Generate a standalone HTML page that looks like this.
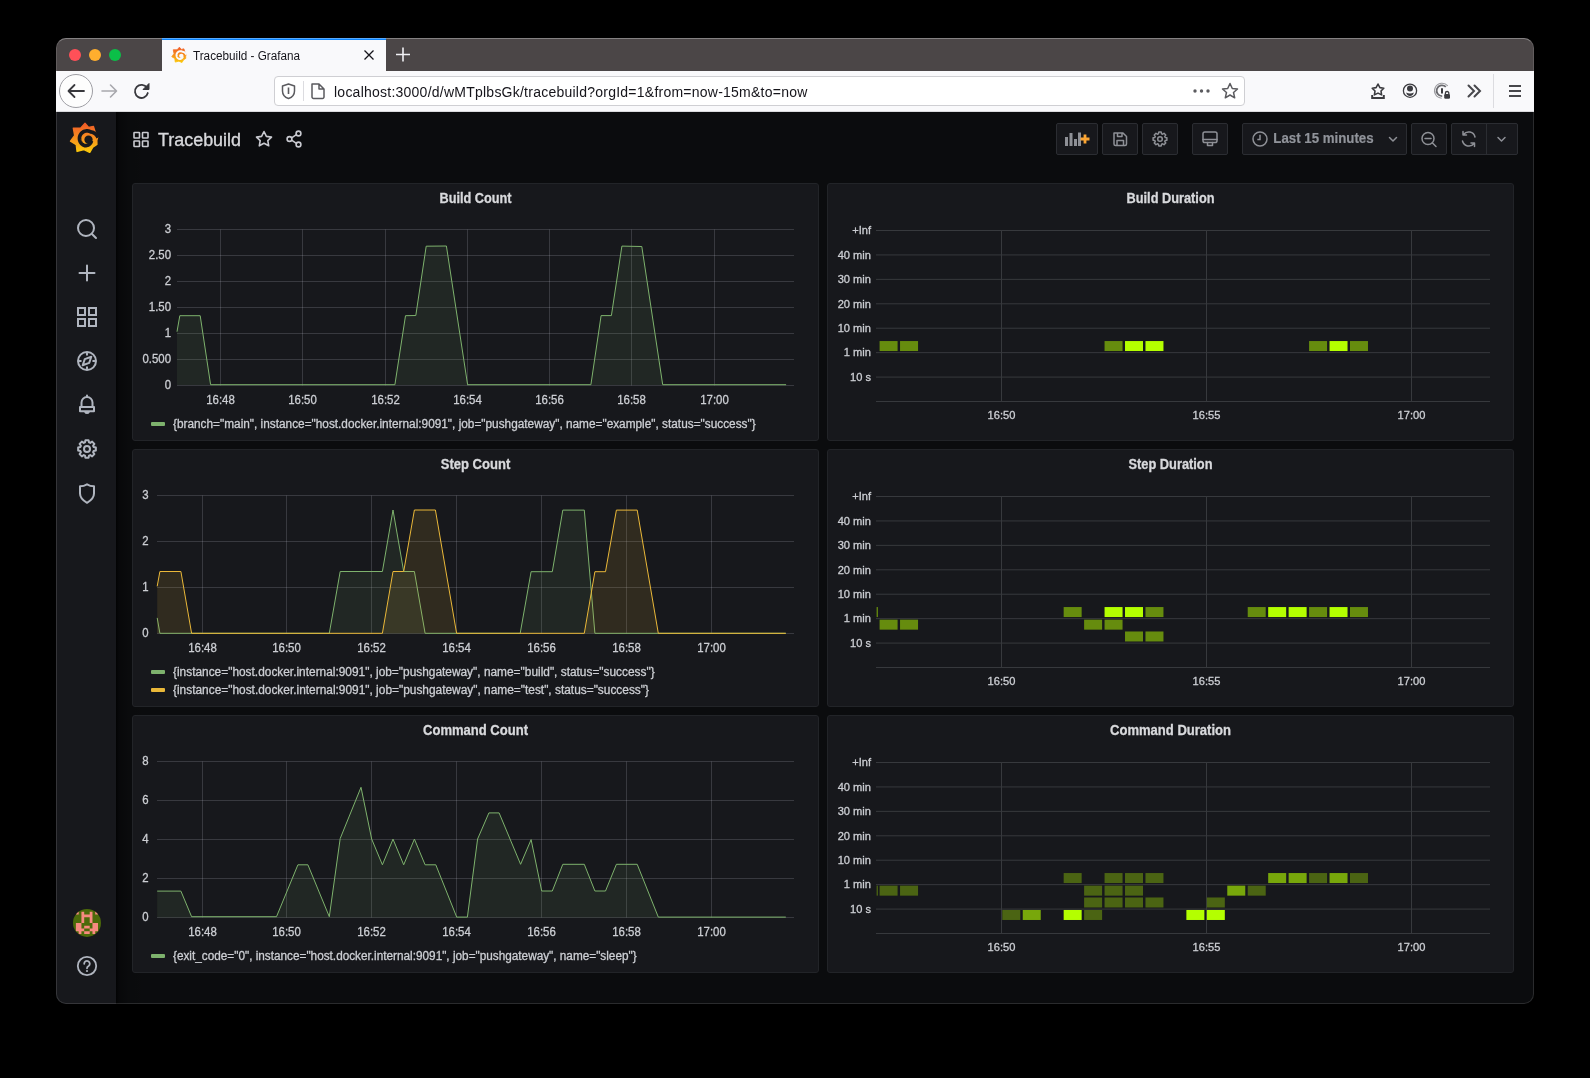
<!DOCTYPE html>
<html>
<head>
<meta charset="utf-8">
<title>Tracebuild - Grafana</title>
<style>
html,body{margin:0;padding:0;}
body{width:1590px;height:1078px;background:#000;position:relative;overflow:hidden;font-family:"Liberation Sans",sans-serif;}
.abs{position:absolute;}
#win{position:absolute;left:56px;top:38px;width:1478px;height:966px;border-radius:10px;overflow:hidden;background:#0b0c0e;}
#titlebar{position:absolute;left:0;top:0;width:1478px;height:33px;background:#4b4647;}
#toolbar{position:absolute;left:0;top:33px;width:1478px;height:41px;background:#f9f9fb;}
#tab{position:absolute;left:106px;top:0;width:224px;height:33px;background:#f9f9fb;}
#tab .blue{position:absolute;left:0;top:0;width:224px;height:2px;background:#0a84ff;}
#sidebar{position:absolute;left:0;top:74px;width:60px;height:892px;background:#17181c;}
#winborder{position:absolute;left:56px;top:38px;width:1478px;height:966px;border-radius:10px;box-sizing:border-box;border:1px solid rgba(255,255,255,0.13);border-top-color:rgba(255,255,255,0.32);pointer-events:none;}
#topedge{position:absolute;left:66px;top:38px;width:1458px;height:1px;background:rgba(255,255,255,0.28);}
.light{position:absolute;top:49px;width:12px;height:12px;border-radius:50%;}
#url{position:absolute;left:274px;top:76px;width:971px;height:30px;box-sizing:border-box;border:1px solid #cfcfd3;border-radius:4px;background:#fff;}
.urltext{position:absolute;left:334px;top:84px;font-size:14px;line-height:16px;color:#15141a;white-space:nowrap;letter-spacing:0.24px;will-change:transform;}
.btn{position:absolute;top:123px;height:32px;box-sizing:border-box;border:1px solid #2b2d32;border-radius:2px;background:#17181c;}
svg{position:absolute;left:0;top:0;overflow:visible;will-change:transform;}
svg text{font-family:"Liberation Sans",sans-serif;}
</style>
</head>
<body>
<div id="win">
  <div id="titlebar"></div>
  <div id="tab"><div class="blue"></div></div>
  <div id="toolbar"></div>
  <div id="sidebar"></div>
  <div style="position:absolute;left:60px;top:74px;width:30px;height:892px;background:linear-gradient(to right, rgba(0,0,0,0.75) 0px, rgba(0,0,0,0.35) 3px, rgba(0,0,0,0.12) 12px, rgba(0,0,0,0) 30px);"></div>
</div>
<div class="light" style="left:69px;background:#ff5058;"></div>
<div class="light" style="left:89px;background:#ffae2e;"></div>
<div class="light" style="left:109px;background:#0bbf48;"></div>

<div id="url"></div>
<div style="position:absolute;left:303px;top:81px;width:1px;height:20px;background:#dcdce0;"></div>
<div class="urltext">localhost:3000/d/wMTplbsGk/tracebuild?orgId=1&amp;from=now-15m&amp;to=now</div>
<div style="position:absolute;left:1493px;top:74px;width:1px;height:34px;background:#dcdce0;"></div>
<div style="position:absolute;left:56px;top:111px;width:1478px;height:1px;background:#dadadd;"></div>

<!-- header buttons -->
<div class="btn" style="left:1056px;width:42px;"></div>
<div class="btn" style="left:1102px;width:36px;"></div>
<div class="btn" style="left:1142px;width:36px;"></div>
<div class="btn" style="left:1192px;width:36px;"></div>
<div class="btn" style="left:1242px;width:165px;"></div>
<div class="btn" style="left:1411px;width:36px;"></div>
<div class="btn" style="left:1451px;width:67px;"></div>
<div style="position:absolute;left:1486px;top:124px;width:1px;height:30px;background:#2b2d32;"></div>

<svg width="1590" height="1078" viewBox="0 0 1590 1078">
<defs>
  <linearGradient id="glogo" x1="0" y1="0" x2="0" y2="1">
    <stop offset="0" stop-color="#f05a28"/><stop offset="0.55" stop-color="#f7941d"/>
    <stop offset="1" stop-color="#fbca0a"/>
  </linearGradient>
</defs>
<!-- ========== browser chrome ========== -->
<!-- tab favicon -->
<path d="M179.40,47.20 L181.35,49.40 L183.90,48.85 L184.87,51.99 L186.20,54.35 L185.70,56.28 L185.75,58.40 L183.57,59.87 L181.95,62.60 L178.90,61.13 L175.25,62.10 L174.80,58.52 L171.75,56.70 L173.99,53.69 L173.25,49.75 L177.12,49.83 Z" fill="url(#glogo)" stroke="url(#glogo)" stroke-width="0.80" stroke-linejoin="round"/>
<path d="M186.39,54.79 L186.22,54.43 L186.04,54.10 L185.84,53.78 L185.62,53.49 L185.39,53.21 L185.14,52.96 L184.88,52.74 L184.61,52.53 L184.33,52.35 L184.05,52.20 L183.76,52.07 L183.47,51.96 L183.18,51.87 L182.90,51.81 L182.61,51.78 L182.38,51.67 L182.15,51.56 L181.92,51.46 L181.68,51.38 L181.44,51.31 L181.19,51.26 L180.94,51.22 L180.69,51.20 L180.43,51.20 L180.18,51.21 L179.93,51.24 L179.68,51.28 L179.44,51.34 L179.19,51.42 L178.96,51.51 L178.73,51.61 L178.51,51.73 L178.29,51.87 L178.08,52.01 L177.89,52.17 L177.70,52.34 L177.53,52.52 L177.36,52.72 L177.21,52.92 L177.08,53.13 L176.95,53.35 L176.84,53.58 L176.75,53.82 L176.67,54.06 L176.60,54.30 L176.55,54.55 L176.52,54.80 L176.50,55.05 L176.50,55.30 L176.52,55.56 L176.55,55.81 L176.59,56.06 L176.65,56.30 L176.73,56.54 L176.82,56.78 L176.93,57.01 L177.05,57.23 L177.19,57.44 L177.34,57.65 L177.50,57.84 L177.67,58.03 L177.85,58.20 L178.05,58.36 L178.25,58.51 L178.47,58.64 L178.69,58.77 L178.92,58.87 L179.15,58.97 L179.39,59.04 L179.65,59.05 L179.91,59.03 L180.15,59.00 L180.40,58.95 L180.63,58.89 L180.86,58.81 L181.08,58.72 L181.28,58.62 L181.48,58.50 L181.67,58.37 L181.84,58.24 L182.00,58.09 L182.15,57.94 L182.28,57.78 L182.40,57.61 L182.51,57.44 L182.60,57.27 L182.68,57.09 L182.75,56.91 L182.80,56.73 L182.84,56.55" fill="none" stroke="#f9f9fb" stroke-width="1.95" stroke-linecap="butt" stroke-linejoin="round"/>
<circle cx="181.30" cy="55.85" r="2.20" fill="#f9f9fb"/>
<text x="193" y="59.8" font-size="12" fill="#15141a" textLength="107" lengthAdjust="spacingAndGlyphs">Tracebuild - Grafana</text>
<path d="M364.5,50.5 L373.5,59.5 M373.5,50.5 L364.5,59.5" stroke="#15141a" stroke-width="1.3"/>
<path d="M403,47.5 V61.5 M396,54.5 H410" stroke="#f0f0f4" stroke-width="1.6"/>

<!-- back / forward / reload -->
<circle cx="76" cy="91" r="16.5" fill="#fdfdfd" stroke="#9d9da3" stroke-width="1"/>
<path d="M84,91 H69 M74.5,85 L68.5,91 L74.5,97" fill="none" stroke="#38383d" stroke-width="1.8" stroke-linecap="round" stroke-linejoin="round"/>
<path d="M102,91 H116 M110.5,85 L116.5,91 L110.5,97" fill="none" stroke="#a8a8ad" stroke-width="1.6" stroke-linecap="round" stroke-linejoin="round"/>
<path d="M147,88 A6.5,6.5 0 1 0 147.8,93" fill="none" stroke="#38383d" stroke-width="1.8" stroke-linecap="round"/>
<path d="M149,83.5 L149,89.5 L143,89.5 Z" fill="#38383d" stroke="#38383d" stroke-width="1" stroke-linejoin="round"/>

<!-- url icons -->
<path d="M288.5,84 L294.5,86 V91 C294.5,95 291.5,97.5 288.5,98.5 C285.5,97.5 282.5,95 282.5,91 V86 Z" fill="none" stroke="#5b5b5f" stroke-width="1.5" stroke-linejoin="round"/>
<path d="M288.5,87.5 V94" stroke="#5b5b5f" stroke-width="1.6"/>
<path d="M312,84 H319 L324,89 V97 A1.5,1.5 0 0 1 322.5,98.5 H313.5 A1.5,1.5 0 0 1 312,97 Z M319,84 V89 H324" fill="none" stroke="#5b5b5f" stroke-width="1.5" stroke-linejoin="round"/>
<circle cx="1195" cy="91" r="1.7" fill="#5b5b5f"/><circle cx="1201.5" cy="91" r="1.7" fill="#5b5b5f"/><circle cx="1208" cy="91" r="1.7" fill="#5b5b5f"/>
<path d="M1230,83.5 L1232.3,88.5 L1237.5,89 L1233.5,92.5 L1234.7,97.8 L1230,95 L1225.3,97.8 L1226.5,92.5 L1222.5,89 L1227.7,88.5 Z" fill="none" stroke="#5b5b5f" stroke-width="1.5" stroke-linejoin="round"/>

<!-- right toolbar icons -->
<path d="M1378,84 L1379.9,87.6 L1383.8,88.2 L1381,91 L1381.6,94.9 L1378,93.1 L1374.4,94.9 L1375,91 L1372.2,88.2 L1376.1,87.6 Z" fill="none" stroke="#3b3b3f" stroke-width="1.6" stroke-linejoin="round"/>
<path d="M1372.2,95 V98 H1383.8 V95" fill="none" stroke="#3b3b3f" stroke-width="2"/>
<circle cx="1410" cy="90.7" r="6.6" fill="none" stroke="#3b3b3f" stroke-width="1.3"/>
<circle cx="1410" cy="88.6" r="3" fill="#3b3b3f"/>
<path d="M1406.2,92.6 Q1410,94.4 1413.8,92.6 Q1413.2,95.9 1410,96 Q1406.8,95.9 1406.2,92.6 Z" fill="#3b3b3f"/>
<path d="M1447.75,85.88 A7.5,7.5 0 1 0 1441.74,98.20" fill="none" stroke="#9a9a9e" stroke-width="1.1"/>
<path d="M1445.82,86.88 A5.4,5.4 0 1 0 1442.19,96.10" fill="none" stroke="#6a6a6e" stroke-width="1.8"/>
<path d="M1442,88.2 V93.6" stroke="#3b3b3f" stroke-width="2"/>
<rect x="1444.2" y="94" width="5.8" height="4.8" rx="1.2" fill="#3b3b3f"/>
<path d="M1445.4,94.5 V93.2 A1.7,1.7 0 0 1 1448.8,93.2 V94.5" fill="none" stroke="#3b3b3f" stroke-width="1.3"/>
<path d="M1468.5,85.5 L1474,91 L1468.5,96.5 M1474.5,85.5 L1480,91 L1474.5,96.5" fill="none" stroke="#47474b" stroke-width="2" stroke-linecap="round" stroke-linejoin="miter"/>
<path d="M1509,86 H1521 M1509,91 H1521 M1509,96 H1521" stroke="#47474b" stroke-width="2"/>

<!-- ========== grafana sidebar ========== -->
<path d="M84.92,123.37 L88.59,127.52 L93.38,126.47 L95.20,132.37 L97.71,136.81 L96.77,140.44 L96.86,144.43 L92.77,147.18 L89.72,152.32 L83.99,149.57 L77.12,151.38 L76.28,144.65 L70.54,141.23 L74.76,135.57 L73.36,128.17 L80.63,128.32 Z" fill="url(#glogo)" stroke="url(#glogo)" stroke-width="1.50" stroke-linejoin="round"/>
<path d="M98.06,137.64 L97.75,136.97 L97.41,136.34 L97.03,135.75 L96.62,135.19 L96.18,134.68 L95.71,134.21 L95.22,133.78 L94.72,133.40 L94.20,133.06 L93.67,132.77 L93.13,132.52 L92.58,132.32 L92.04,132.16 L91.50,132.05 L90.96,131.97 L90.53,131.77 L90.10,131.56 L89.66,131.38 L89.21,131.23 L88.75,131.10 L88.29,131.00 L87.82,130.94 L87.34,130.90 L86.87,130.89 L86.39,130.92 L85.92,130.97 L85.45,131.05 L84.99,131.16 L84.54,131.30 L84.09,131.47 L83.66,131.67 L83.24,131.89 L82.84,132.14 L82.45,132.42 L82.08,132.72 L81.73,133.04 L81.40,133.38 L81.10,133.75 L80.81,134.13 L80.55,134.53 L80.32,134.94 L80.12,135.37 L79.94,135.81 L79.79,136.26 L79.66,136.72 L79.57,137.19 L79.51,137.66 L79.48,138.13 L79.47,138.61 L79.50,139.08 L79.56,139.55 L79.65,140.02 L79.76,140.48 L79.91,140.93 L80.08,141.38 L80.28,141.81 L80.51,142.22 L80.76,142.63 L81.04,143.01 L81.35,143.38 L81.67,143.73 L82.02,144.05 L82.38,144.35 L82.77,144.63 L83.17,144.89 L83.59,145.12 L84.02,145.32 L84.46,145.49 L84.91,145.64 L85.40,145.64 L85.87,145.61 L86.34,145.56 L86.80,145.47 L87.24,145.35 L87.67,145.20 L88.07,145.03 L88.46,144.84 L88.83,144.62 L89.18,144.38 L89.51,144.12 L89.81,143.85 L90.09,143.56 L90.34,143.26 L90.57,142.95 L90.77,142.62 L90.95,142.30 L91.09,141.96 L91.22,141.63 L91.32,141.29 L91.39,140.95" fill="none" stroke="#17181c" stroke-width="3.67" stroke-linecap="butt" stroke-linejoin="round"/>
<circle cx="88.50" cy="139.63" r="4.14" fill="#17181c"/>
<g fill="none" stroke="#b0b5bf" stroke-width="2" stroke-linecap="round" stroke-linejoin="round">
  <circle cx="86" cy="228" r="8"/><path d="M92.2,234.2 L96,238"/>
  <path d="M87,265.5 V280.5 M79.5,273 H94.5"/>
</g>
<g fill="none" stroke="#b0b5bf" stroke-width="2" stroke-linejoin="miter">
  <rect x="78" y="308" width="7" height="7"/><rect x="89" y="308" width="7" height="7"/>
  <rect x="78" y="319" width="7" height="7"/><rect x="89" y="319" width="7" height="7"/>
</g>
<g fill="none" stroke="#b0b5bf" stroke-width="2" stroke-linecap="round" stroke-linejoin="round">
  <circle cx="87" cy="361" r="9"/>
  <path d="M87,353.5 V354.8 M87,367.2 V368.5 M79.5,361 H80.8 M93.2,361 H94.5"/>
  <path d="M91.3,356.7 L89.2,362.9 L82.7,365.3 L84.8,359.1 Z"/>
  <path d="M81.5,406.3 V402.5 A5.5,5.5 0 0 1 92.5,402.5 V406.3 M80,407 H94 V411.3 H80 Z M85.2,412 A2,1.8 0 0 0 88.8,412 M87,395.5 V397"/>
  <path d="M84.98,442.40 L85.44,440.14 L88.56,440.14 L89.02,442.40 L90.24,442.91 L92.16,441.63 L94.37,443.84 L93.09,445.76 L93.60,446.98 L95.86,447.44 L95.86,450.56 L93.60,451.02 L93.09,452.24 L94.37,454.16 L92.16,456.37 L90.24,455.09 L89.02,455.60 L88.56,457.86 L85.44,457.86 L84.98,455.60 L83.76,455.09 L81.84,456.37 L79.63,454.16 L80.91,452.24 L80.40,451.02 L78.14,450.56 L78.14,447.44 L80.40,446.98 L80.91,445.76 L79.63,443.84 L81.84,441.63 L83.76,442.91 Z" fill="none" stroke="#b0b5bf" stroke-width="2.0" stroke-linejoin="round"/><circle cx="87" cy="449" r="3.0" fill="none" stroke="#b0b5bf" stroke-width="2.0"/>
  <path d="M87,484.3 C85,485.6 82.5,486.3 80,486.3 V493.5 C80,497.5 83,500.5 87,502.8 C91,500.5 94,497.5 94,493.5 V486.3 C91.5,486.3 89,485.6 87,484.3 Z"/>
  <circle cx="87" cy="966" r="9.2" stroke-width="1.8"/>
</g>
<path d="M84.2,963.8 A2.8,2.8 0 1 1 88.6,966 C87.5,966.6 87,967.2 87,968.3" fill="none" stroke="#b0b5bf" stroke-width="1.8" stroke-linecap="round"/>
<circle cx="87" cy="971" r="1.1" fill="#b0b5bf"/>
<!-- avatar -->
<defs><clipPath id="avclip"><circle cx="87" cy="922.9" r="14"/></clipPath></defs>
<g clip-path="url(#avclip)">
  <rect x="72" y="908" width="30" height="30" fill="#4c6a0a"/>
  <path d="M75.90,911.70 h2.78 v2.82 h-2.78 Z M81.42,911.70 h2.78 v2.82 h-2.78 Z M89.70,911.70 h2.78 v2.82 h-2.78 Z M95.22,911.70 h2.78 v2.82 h-2.78 Z M81.42,914.50 h2.78 v2.82 h-2.78 Z M84.18,914.50 h2.78 v2.82 h-2.78 Z M86.94,914.50 h2.78 v2.82 h-2.78 Z M89.70,914.50 h2.78 v2.82 h-2.78 Z M81.42,917.30 h2.78 v2.82 h-2.78 Z M89.70,917.30 h2.78 v2.82 h-2.78 Z M81.42,920.10 h2.78 v2.82 h-2.78 Z M89.70,920.10 h2.78 v2.82 h-2.78 Z M75.90,922.90 h2.78 v2.82 h-2.78 Z M78.66,922.90 h2.78 v2.82 h-2.78 Z M92.46,922.90 h2.78 v2.82 h-2.78 Z M95.22,922.90 h2.78 v2.82 h-2.78 Z M75.90,925.70 h2.78 v2.82 h-2.78 Z M78.66,925.70 h2.78 v2.82 h-2.78 Z M84.18,925.70 h2.78 v2.82 h-2.78 Z M86.94,925.70 h2.78 v2.82 h-2.78 Z M92.46,925.70 h2.78 v2.82 h-2.78 Z M95.22,925.70 h2.78 v2.82 h-2.78 Z M75.90,928.50 h2.78 v2.82 h-2.78 Z M78.66,928.50 h2.78 v2.82 h-2.78 Z M81.42,928.50 h2.78 v2.82 h-2.78 Z M89.70,928.50 h2.78 v2.82 h-2.78 Z M92.46,928.50 h2.78 v2.82 h-2.78 Z M95.22,928.50 h2.78 v2.82 h-2.78 Z M78.66,931.30 h2.78 v2.82 h-2.78 Z M84.18,931.30 h2.78 v2.82 h-2.78 Z M86.94,931.30 h2.78 v2.82 h-2.78 Z M92.46,931.30 h2.78 v2.82 h-2.78 Z" fill="#f78a80"/>
</g>

<!-- ========== grafana header ========== -->
<g fill="none" stroke="#c9cad0" stroke-width="1.6" stroke-linejoin="round" stroke-linecap="round">
  <rect x="134" y="132.5" width="5.5" height="5.5" rx="0.5"/><rect x="142.5" y="132.5" width="5.5" height="5.5" rx="0.5"/>
  <rect x="134" y="141" width="5.5" height="5.5" rx="0.5"/><rect x="142.5" y="141" width="5.5" height="5.5" rx="0.5"/>
  <path d="M264,131.5 L266.4,136.4 L271.5,137.1 L267.8,140.6 L268.7,145.8 L264,143.3 L259.3,145.8 L260.2,140.6 L256.5,137.1 L261.6,136.4 Z"/>
  <circle cx="298.5" cy="133.5" r="2.4"/><circle cx="289.5" cy="139" r="2.4"/><circle cx="298.5" cy="144.5" r="2.4"/>
  <path d="M291.6,137.8 L296.4,134.7 M291.6,140.2 L296.4,143.3"/>
</g>
<text x="158" y="146" font-size="18.5" fill="#d8d9dc" stroke="#d8d9dc" stroke-width="0.35" textLength="83" lengthAdjust="spacingAndGlyphs">Tracebuild</text>

<!-- header button icons -->
<g fill="#8e9096">
  <rect x="1065" y="137" width="3" height="9"/><rect x="1069.5" y="133" width="3" height="13"/><rect x="1074" y="139" width="3" height="7"/><rect x="1078" y="132.5" width="3" height="13.5"/>
</g>
<path d="M1085,134.5 V143.5 M1080.5,139 H1089.5" stroke="#fba534" stroke-width="2.8"/>
<g fill="none" stroke="#8e9096" stroke-width="1.5" stroke-linejoin="round" stroke-linecap="round">
  <path d="M1114,133 H1123 L1126.5,136.5 V144 A1.5,1.5 0 0 1 1125,145.5 H1115.5 A1.5,1.5 0 0 1 1114,144 Z M1117.5,133 V136.5 H1122 V133 M1117,145.5 V140.5 H1123.5 V145.5"/>
  <path d="M1158.42,133.84 L1158.78,132.11 L1161.22,132.11 L1161.58,133.84 L1162.54,134.23 L1164.02,133.27 L1165.73,134.98 L1164.77,136.46 L1165.16,137.42 L1166.89,137.78 L1166.89,140.22 L1165.16,140.58 L1164.77,141.54 L1165.73,143.02 L1164.02,144.73 L1162.54,143.77 L1161.58,144.16 L1161.22,145.89 L1158.78,145.89 L1158.42,144.16 L1157.46,143.77 L1155.98,144.73 L1154.27,143.02 L1155.23,141.54 L1154.84,140.58 L1153.11,140.22 L1153.11,137.78 L1154.84,137.42 L1155.23,136.46 L1154.27,134.98 L1155.98,133.27 L1157.46,134.23 Z" fill="none" stroke="#8e9096" stroke-width="1.5" stroke-linejoin="round"/><circle cx="1160" cy="139" r="2.3" fill="none" stroke="#8e9096" stroke-width="1.5"/>
  <rect x="1203" y="132" width="14" height="10.5" rx="1.8"/><path d="M1203,139.5 H1217 M1207.5,145.5 H1212.5 V142.5 M1207.5,145.5 V142.5"/>
  <circle cx="1260" cy="139" r="7"/><path d="M1260,134.8 V139.6 H1257.3" stroke-linecap="butt" stroke-linejoin="miter"/>
  <path d="M1389.5,137.5 L1393,141 L1396.5,137.5"/>
  <circle cx="1428" cy="138.5" r="6"/><path d="M1425,138.5 H1431 M1432.5,143 L1436,146.5"/>
  <path d="M1462.5,141 A6.5,6.5 0 0 0 1474,143.5 M1475,137 A6.5,6.5 0 0 0 1463.5,134.5 M1474.5,146.5 V143 H1471 M1463,131.5 V135 H1466.5"/>
  <path d="M1498,137.5 L1501.5,141 L1505,137.5"/>
</g>
<text x="1273.3" y="142.6" font-size="14" font-weight="bold" fill="#90939a" stroke="#90939a" stroke-width="0.2" textLength="100.3" lengthAdjust="spacingAndGlyphs">Last 15 minutes</text>

<!-- ========== panels ========== -->
<rect x="132.5" y="183.5" width="686" height="257" rx="2.5" fill="#17181c" stroke="#222428" stroke-width="1"/>
<text x="475.5" y="203" font-size="14" fill="#d8d9dc" text-anchor="middle" font-weight="bold" textLength="72" lengthAdjust="spacingAndGlyphs" stroke="#d8d9dc" stroke-width="0.3" >Build Count</text>
<line x1="177" y1="229.5" x2="794" y2="229.5" stroke="rgba(204,204,220,0.19)" stroke-width="1"/>
<line x1="177" y1="255.5" x2="794" y2="255.5" stroke="rgba(204,204,220,0.19)" stroke-width="1"/>
<line x1="177" y1="281.5" x2="794" y2="281.5" stroke="rgba(204,204,220,0.19)" stroke-width="1"/>
<line x1="177" y1="307.5" x2="794" y2="307.5" stroke="rgba(204,204,220,0.19)" stroke-width="1"/>
<line x1="177" y1="333.5" x2="794" y2="333.5" stroke="rgba(204,204,220,0.19)" stroke-width="1"/>
<line x1="177" y1="359.5" x2="794" y2="359.5" stroke="rgba(204,204,220,0.19)" stroke-width="1"/>
<line x1="177" y1="385.5" x2="794" y2="385.5" stroke="rgba(204,204,220,0.19)" stroke-width="1"/>
<line x1="220.5" y1="229.5" x2="220.5" y2="385.5" stroke="rgba(204,204,220,0.19)" stroke-width="1"/>
<line x1="302.5" y1="229.5" x2="302.5" y2="385.5" stroke="rgba(204,204,220,0.19)" stroke-width="1"/>
<line x1="385.5" y1="229.5" x2="385.5" y2="385.5" stroke="rgba(204,204,220,0.19)" stroke-width="1"/>
<line x1="467.5" y1="229.5" x2="467.5" y2="385.5" stroke="rgba(204,204,220,0.19)" stroke-width="1"/>
<line x1="549.5" y1="229.5" x2="549.5" y2="385.5" stroke="rgba(204,204,220,0.19)" stroke-width="1"/>
<line x1="631.5" y1="229.5" x2="631.5" y2="385.5" stroke="rgba(204,204,220,0.19)" stroke-width="1"/>
<line x1="714.5" y1="229.5" x2="714.5" y2="385.5" stroke="rgba(204,204,220,0.19)" stroke-width="1"/>
<text x="171" y="233.0" font-size="12.2" fill="#ccced3" text-anchor="end" font-weight="normal" textLength="6.34" lengthAdjust="spacingAndGlyphs" stroke="#ccced3" stroke-width="0.3" >3</text>
<text x="171" y="259.0" font-size="12.2" fill="#ccced3" text-anchor="end" font-weight="normal" textLength="22.20" lengthAdjust="spacingAndGlyphs" stroke="#ccced3" stroke-width="0.3" >2.50</text>
<text x="171" y="285.0" font-size="12.2" fill="#ccced3" text-anchor="end" font-weight="normal" textLength="6.34" lengthAdjust="spacingAndGlyphs" stroke="#ccced3" stroke-width="0.3" >2</text>
<text x="171" y="311.0" font-size="12.2" fill="#ccced3" text-anchor="end" font-weight="normal" textLength="22.20" lengthAdjust="spacingAndGlyphs" stroke="#ccced3" stroke-width="0.3" >1.50</text>
<text x="171" y="337.0" font-size="12.2" fill="#ccced3" text-anchor="end" font-weight="normal" textLength="6.34" lengthAdjust="spacingAndGlyphs" stroke="#ccced3" stroke-width="0.3" >1</text>
<text x="171" y="363.0" font-size="12.2" fill="#ccced3" text-anchor="end" font-weight="normal" textLength="28.55" lengthAdjust="spacingAndGlyphs" stroke="#ccced3" stroke-width="0.3" >0.500</text>
<text x="171" y="389.0" font-size="12.2" fill="#ccced3" text-anchor="end" font-weight="normal" textLength="6.34" lengthAdjust="spacingAndGlyphs" stroke="#ccced3" stroke-width="0.3" >0</text>
<text x="220.5" y="404" font-size="12.2" fill="#ccced3" text-anchor="middle" font-weight="normal" textLength="28.55" lengthAdjust="spacingAndGlyphs" stroke="#ccced3" stroke-width="0.3" >16:48</text>
<text x="302.5" y="404" font-size="12.2" fill="#ccced3" text-anchor="middle" font-weight="normal" textLength="28.55" lengthAdjust="spacingAndGlyphs" stroke="#ccced3" stroke-width="0.3" >16:50</text>
<text x="385.5" y="404" font-size="12.2" fill="#ccced3" text-anchor="middle" font-weight="normal" textLength="28.55" lengthAdjust="spacingAndGlyphs" stroke="#ccced3" stroke-width="0.3" >16:52</text>
<text x="467.5" y="404" font-size="12.2" fill="#ccced3" text-anchor="middle" font-weight="normal" textLength="28.55" lengthAdjust="spacingAndGlyphs" stroke="#ccced3" stroke-width="0.3" >16:54</text>
<text x="549.5" y="404" font-size="12.2" fill="#ccced3" text-anchor="middle" font-weight="normal" textLength="28.55" lengthAdjust="spacingAndGlyphs" stroke="#ccced3" stroke-width="0.3" >16:56</text>
<text x="631.5" y="404" font-size="12.2" fill="#ccced3" text-anchor="middle" font-weight="normal" textLength="28.55" lengthAdjust="spacingAndGlyphs" stroke="#ccced3" stroke-width="0.3" >16:58</text>
<text x="714.5" y="404" font-size="12.2" fill="#ccced3" text-anchor="middle" font-weight="normal" textLength="28.55" lengthAdjust="spacingAndGlyphs" stroke="#ccced3" stroke-width="0.3" >17:00</text>
<path d="M177.0,331.7 L179.8,315.7 L200.2,315.7 L210.6,384.7 L394.9,384.7 L405.5,315.7 L415.8,315.5 L426.2,246.2 L446.4,246.0 L467.6,384.7 L590.9,384.7 L601.1,315.6 L611.4,315.6 L621.9,246.1 L641.8,246.5 L662.7,384.7 L786.1,384.7 L786.1,385 L177.0,385 Z" fill="rgba(126,178,109,0.10)" stroke="none"/>
<path d="M177.0,331.7 L179.8,315.7 L200.2,315.7 L210.6,384.7 L394.9,384.7 L405.5,315.7 L415.8,315.5 L426.2,246.2 L446.4,246.0 L467.6,384.7 L590.9,384.7 L601.1,315.6 L611.4,315.6 L621.9,246.1 L641.8,246.5 L662.7,384.7 L786.1,384.7" fill="none" stroke="#7eb26d" stroke-width="1" stroke-linejoin="round"/>
<rect x="151" y="422" width="14" height="4" rx="1" fill="#7eb26d"/>
<text x="173" y="428" font-size="12" fill="#ccced3" text-anchor="start" font-weight="normal" textLength="582.6" lengthAdjust="spacingAndGlyphs" stroke="#ccced3" stroke-width="0.3" >{branch=&quot;main&quot;, instance=&quot;host.docker.internal:9091&quot;, job=&quot;pushgateway&quot;, name=&quot;example&quot;, status=&quot;success&quot;}</text>
<rect x="132.5" y="449.5" width="686" height="257" rx="2.5" fill="#17181c" stroke="#222428" stroke-width="1"/>
<text x="475.5" y="469" font-size="14" fill="#d8d9dc" text-anchor="middle" font-weight="bold" textLength="69.5" lengthAdjust="spacingAndGlyphs" stroke="#d8d9dc" stroke-width="0.3" >Step Count</text>
<line x1="157" y1="495.5" x2="794" y2="495.5" stroke="rgba(204,204,220,0.19)" stroke-width="1"/>
<line x1="157" y1="541.5" x2="794" y2="541.5" stroke="rgba(204,204,220,0.19)" stroke-width="1"/>
<line x1="157" y1="587.5" x2="794" y2="587.5" stroke="rgba(204,204,220,0.19)" stroke-width="1"/>
<line x1="157" y1="633.5" x2="794" y2="633.5" stroke="rgba(204,204,220,0.19)" stroke-width="1"/>
<line x1="202.5" y1="495.5" x2="202.5" y2="633.5" stroke="rgba(204,204,220,0.19)" stroke-width="1"/>
<line x1="286.5" y1="495.5" x2="286.5" y2="633.5" stroke="rgba(204,204,220,0.19)" stroke-width="1"/>
<line x1="371.5" y1="495.5" x2="371.5" y2="633.5" stroke="rgba(204,204,220,0.19)" stroke-width="1"/>
<line x1="456.5" y1="495.5" x2="456.5" y2="633.5" stroke="rgba(204,204,220,0.19)" stroke-width="1"/>
<line x1="541.5" y1="495.5" x2="541.5" y2="633.5" stroke="rgba(204,204,220,0.19)" stroke-width="1"/>
<line x1="626.5" y1="495.5" x2="626.5" y2="633.5" stroke="rgba(204,204,220,0.19)" stroke-width="1"/>
<line x1="711.5" y1="495.5" x2="711.5" y2="633.5" stroke="rgba(204,204,220,0.19)" stroke-width="1"/>
<text x="148.5" y="499.0" font-size="12.2" fill="#ccced3" text-anchor="end" font-weight="normal" textLength="6.34" lengthAdjust="spacingAndGlyphs" stroke="#ccced3" stroke-width="0.3" >3</text>
<text x="148.5" y="545.0" font-size="12.2" fill="#ccced3" text-anchor="end" font-weight="normal" textLength="6.34" lengthAdjust="spacingAndGlyphs" stroke="#ccced3" stroke-width="0.3" >2</text>
<text x="148.5" y="591.0" font-size="12.2" fill="#ccced3" text-anchor="end" font-weight="normal" textLength="6.34" lengthAdjust="spacingAndGlyphs" stroke="#ccced3" stroke-width="0.3" >1</text>
<text x="148.5" y="637.0" font-size="12.2" fill="#ccced3" text-anchor="end" font-weight="normal" textLength="6.34" lengthAdjust="spacingAndGlyphs" stroke="#ccced3" stroke-width="0.3" >0</text>
<text x="202.5" y="652" font-size="12.2" fill="#ccced3" text-anchor="middle" font-weight="normal" textLength="28.55" lengthAdjust="spacingAndGlyphs" stroke="#ccced3" stroke-width="0.3" >16:48</text>
<text x="286.5" y="652" font-size="12.2" fill="#ccced3" text-anchor="middle" font-weight="normal" textLength="28.55" lengthAdjust="spacingAndGlyphs" stroke="#ccced3" stroke-width="0.3" >16:50</text>
<text x="371.5" y="652" font-size="12.2" fill="#ccced3" text-anchor="middle" font-weight="normal" textLength="28.55" lengthAdjust="spacingAndGlyphs" stroke="#ccced3" stroke-width="0.3" >16:52</text>
<text x="456.5" y="652" font-size="12.2" fill="#ccced3" text-anchor="middle" font-weight="normal" textLength="28.55" lengthAdjust="spacingAndGlyphs" stroke="#ccced3" stroke-width="0.3" >16:54</text>
<text x="541.5" y="652" font-size="12.2" fill="#ccced3" text-anchor="middle" font-weight="normal" textLength="28.55" lengthAdjust="spacingAndGlyphs" stroke="#ccced3" stroke-width="0.3" >16:56</text>
<text x="626.5" y="652" font-size="12.2" fill="#ccced3" text-anchor="middle" font-weight="normal" textLength="28.55" lengthAdjust="spacingAndGlyphs" stroke="#ccced3" stroke-width="0.3" >16:58</text>
<text x="711.5" y="652" font-size="12.2" fill="#ccced3" text-anchor="middle" font-weight="normal" textLength="28.55" lengthAdjust="spacingAndGlyphs" stroke="#ccced3" stroke-width="0.3" >17:00</text>
<path d="M157.2,617.9 L159.9,633.3 L329.3,633.3 L340.2,571.5 L382.4,571.5 L393.0,510.0 L403.7,571.5 L414.4,571.5 L425.1,633.3 L520.2,633.3 L531.1,571.7 L552.3,571.7 L562.8,510.1 L584.3,510.1 L594.9,633.3 L785.8,633.3 L785.8,633.5 L157.2,633.5 Z" fill="rgba(126,178,109,0.10)" stroke="none"/>
<path d="M157.2,617.9 L159.9,633.3 L329.3,633.3 L340.2,571.5 L382.4,571.5 L393.0,510.0 L403.7,571.5 L414.4,571.5 L425.1,633.3 L520.2,633.3 L531.1,571.7 L552.3,571.7 L562.8,510.1 L584.3,510.1 L594.9,633.3 L785.8,633.3" fill="none" stroke="#7eb26d" stroke-width="1" stroke-linejoin="round"/>
<path d="M157.2,586.3 L159.9,571.5 L180.9,571.5 L191.6,633.3 L382.4,633.3 L393.0,571.5 L403.7,571.5 L414.4,510.0 L435.4,510.0 L456.6,633.3 L584.3,633.3 L594.9,571.7 L605.5,571.7 L616.4,510.1 L637.2,510.1 L658.3,633.3 L785.8,633.3 L785.8,633.5 L157.2,633.5 Z" fill="rgba(234,184,57,0.12)" stroke="none"/>
<path d="M157.2,586.3 L159.9,571.5 L180.9,571.5 L191.6,633.3 L382.4,633.3 L393.0,571.5 L403.7,571.5 L414.4,510.0 L435.4,510.0 L456.6,633.3 L584.3,633.3 L594.9,571.7 L605.5,571.7 L616.4,510.1 L637.2,510.1 L658.3,633.3 L785.8,633.3" fill="none" stroke="#eab839" stroke-width="1" stroke-linejoin="round"/>
<rect x="151" y="670" width="14" height="4" rx="1" fill="#7eb26d"/>
<text x="173" y="676" font-size="12" fill="#ccced3" text-anchor="start" font-weight="normal" textLength="481.7" lengthAdjust="spacingAndGlyphs" stroke="#ccced3" stroke-width="0.3" >{instance=&quot;host.docker.internal:9091&quot;, job=&quot;pushgateway&quot;, name=&quot;build&quot;, status=&quot;success&quot;}</text>
<rect x="151" y="688" width="14" height="4" rx="1" fill="#eab839"/>
<text x="173" y="694" font-size="12" fill="#ccced3" text-anchor="start" font-weight="normal" textLength="476" lengthAdjust="spacingAndGlyphs" stroke="#ccced3" stroke-width="0.3" >{instance=&quot;host.docker.internal:9091&quot;, job=&quot;pushgateway&quot;, name=&quot;test&quot;, status=&quot;success&quot;}</text>
<rect x="132.5" y="715.5" width="686" height="257" rx="2.5" fill="#17181c" stroke="#222428" stroke-width="1"/>
<text x="475.5" y="735" font-size="14" fill="#d8d9dc" text-anchor="middle" font-weight="bold" textLength="105" lengthAdjust="spacingAndGlyphs" stroke="#d8d9dc" stroke-width="0.3" >Command Count</text>
<line x1="157" y1="761.5" x2="794" y2="761.5" stroke="rgba(204,204,220,0.19)" stroke-width="1"/>
<line x1="157" y1="800.5" x2="794" y2="800.5" stroke="rgba(204,204,220,0.19)" stroke-width="1"/>
<line x1="157" y1="839.5" x2="794" y2="839.5" stroke="rgba(204,204,220,0.19)" stroke-width="1"/>
<line x1="157" y1="878.5" x2="794" y2="878.5" stroke="rgba(204,204,220,0.19)" stroke-width="1"/>
<line x1="157" y1="917.5" x2="794" y2="917.5" stroke="rgba(204,204,220,0.19)" stroke-width="1"/>
<line x1="202.5" y1="761.5" x2="202.5" y2="917.5" stroke="rgba(204,204,220,0.19)" stroke-width="1"/>
<line x1="286.5" y1="761.5" x2="286.5" y2="917.5" stroke="rgba(204,204,220,0.19)" stroke-width="1"/>
<line x1="371.5" y1="761.5" x2="371.5" y2="917.5" stroke="rgba(204,204,220,0.19)" stroke-width="1"/>
<line x1="456.5" y1="761.5" x2="456.5" y2="917.5" stroke="rgba(204,204,220,0.19)" stroke-width="1"/>
<line x1="541.5" y1="761.5" x2="541.5" y2="917.5" stroke="rgba(204,204,220,0.19)" stroke-width="1"/>
<line x1="626.5" y1="761.5" x2="626.5" y2="917.5" stroke="rgba(204,204,220,0.19)" stroke-width="1"/>
<line x1="711.5" y1="761.5" x2="711.5" y2="917.5" stroke="rgba(204,204,220,0.19)" stroke-width="1"/>
<text x="148.5" y="765.0" font-size="12.2" fill="#ccced3" text-anchor="end" font-weight="normal" textLength="6.34" lengthAdjust="spacingAndGlyphs" stroke="#ccced3" stroke-width="0.3" >8</text>
<text x="148.5" y="804.0" font-size="12.2" fill="#ccced3" text-anchor="end" font-weight="normal" textLength="6.34" lengthAdjust="spacingAndGlyphs" stroke="#ccced3" stroke-width="0.3" >6</text>
<text x="148.5" y="843.0" font-size="12.2" fill="#ccced3" text-anchor="end" font-weight="normal" textLength="6.34" lengthAdjust="spacingAndGlyphs" stroke="#ccced3" stroke-width="0.3" >4</text>
<text x="148.5" y="882.0" font-size="12.2" fill="#ccced3" text-anchor="end" font-weight="normal" textLength="6.34" lengthAdjust="spacingAndGlyphs" stroke="#ccced3" stroke-width="0.3" >2</text>
<text x="148.5" y="921.0" font-size="12.2" fill="#ccced3" text-anchor="end" font-weight="normal" textLength="6.34" lengthAdjust="spacingAndGlyphs" stroke="#ccced3" stroke-width="0.3" >0</text>
<text x="202.5" y="936" font-size="12.2" fill="#ccced3" text-anchor="middle" font-weight="normal" textLength="28.55" lengthAdjust="spacingAndGlyphs" stroke="#ccced3" stroke-width="0.3" >16:48</text>
<text x="286.5" y="936" font-size="12.2" fill="#ccced3" text-anchor="middle" font-weight="normal" textLength="28.55" lengthAdjust="spacingAndGlyphs" stroke="#ccced3" stroke-width="0.3" >16:50</text>
<text x="371.5" y="936" font-size="12.2" fill="#ccced3" text-anchor="middle" font-weight="normal" textLength="28.55" lengthAdjust="spacingAndGlyphs" stroke="#ccced3" stroke-width="0.3" >16:52</text>
<text x="456.5" y="936" font-size="12.2" fill="#ccced3" text-anchor="middle" font-weight="normal" textLength="28.55" lengthAdjust="spacingAndGlyphs" stroke="#ccced3" stroke-width="0.3" >16:54</text>
<text x="541.5" y="936" font-size="12.2" fill="#ccced3" text-anchor="middle" font-weight="normal" textLength="28.55" lengthAdjust="spacingAndGlyphs" stroke="#ccced3" stroke-width="0.3" >16:56</text>
<text x="626.5" y="936" font-size="12.2" fill="#ccced3" text-anchor="middle" font-weight="normal" textLength="28.55" lengthAdjust="spacingAndGlyphs" stroke="#ccced3" stroke-width="0.3" >16:58</text>
<text x="711.5" y="936" font-size="12.2" fill="#ccced3" text-anchor="middle" font-weight="normal" textLength="28.55" lengthAdjust="spacingAndGlyphs" stroke="#ccced3" stroke-width="0.3" >17:00</text>
<path d="M157.2,891.1 L180.9,891.1 L191.6,916.7 L276.5,916.7 L297.9,864.8 L307.9,864.8 L329.3,916.7 L340.2,838.5 L361.0,787.3 L371.7,839.1 L382.4,864.8 L393.0,839.1 L403.7,864.8 L414.4,839.1 L425.1,864.8 L435.8,864.8 L456.7,917.1 L467.4,917.1 L477.6,839.0 L488.9,812.9 L499.1,812.9 L520.6,864.3 L531.1,839.6 L541.7,891.0 L552.3,891.0 L562.8,864.3 L584.3,864.3 L594.9,891.0 L605.5,891.0 L616.4,864.3 L637.2,864.3 L658.3,917.1 L785.8,917.1 L785.8,917.5 L157.2,917.5 Z" fill="rgba(126,178,109,0.10)" stroke="none"/>
<path d="M157.2,891.1 L180.9,891.1 L191.6,916.7 L276.5,916.7 L297.9,864.8 L307.9,864.8 L329.3,916.7 L340.2,838.5 L361.0,787.3 L371.7,839.1 L382.4,864.8 L393.0,839.1 L403.7,864.8 L414.4,839.1 L425.1,864.8 L435.8,864.8 L456.7,917.1 L467.4,917.1 L477.6,839.0 L488.9,812.9 L499.1,812.9 L520.6,864.3 L531.1,839.6 L541.7,891.0 L552.3,891.0 L562.8,864.3 L584.3,864.3 L594.9,891.0 L605.5,891.0 L616.4,864.3 L637.2,864.3 L658.3,917.1 L785.8,917.1" fill="none" stroke="#7eb26d" stroke-width="1" stroke-linejoin="round"/>
<rect x="151" y="954" width="14" height="4" rx="1" fill="#7eb26d"/>
<text x="173" y="960" font-size="12" fill="#ccced3" text-anchor="start" font-weight="normal" textLength="463.6" lengthAdjust="spacingAndGlyphs" stroke="#ccced3" stroke-width="0.3" >{exit_code=&quot;0&quot;, instance=&quot;host.docker.internal:9091&quot;, job=&quot;pushgateway&quot;, name=&quot;sleep&quot;}</text>
<rect x="827.5" y="183.5" width="686" height="257" rx="2.5" fill="#17181c" stroke="#222428" stroke-width="1"/>
<text x="1170.5" y="203" font-size="14" fill="#d8d9dc" text-anchor="middle" font-weight="bold" textLength="88" lengthAdjust="spacingAndGlyphs" stroke="#d8d9dc" stroke-width="0.3" >Build Duration</text>
<line x1="876" y1="230.50" x2="1490" y2="230.50" stroke="#37393d" stroke-width="1"/>
<line x1="876" y1="254.93" x2="1490" y2="254.93" stroke="#37393d" stroke-width="1"/>
<line x1="876" y1="279.36" x2="1490" y2="279.36" stroke="#37393d" stroke-width="1"/>
<line x1="876" y1="303.79" x2="1490" y2="303.79" stroke="#37393d" stroke-width="1"/>
<line x1="876" y1="328.22" x2="1490" y2="328.22" stroke="#37393d" stroke-width="1"/>
<line x1="876" y1="352.65" x2="1490" y2="352.65" stroke="#37393d" stroke-width="1"/>
<line x1="876" y1="377.08" x2="1490" y2="377.08" stroke="#37393d" stroke-width="1"/>
<line x1="876" y1="401.51" x2="1490" y2="401.51" stroke="#37393d" stroke-width="1"/>
<line x1="1001.5" y1="230.5" x2="1001.5" y2="401.5" stroke="#37393d" stroke-width="1"/>
<line x1="1206.5" y1="230.5" x2="1206.5" y2="401.5" stroke="#37393d" stroke-width="1"/>
<line x1="1411.5" y1="230.5" x2="1411.5" y2="401.5" stroke="#37393d" stroke-width="1"/>
<text x="871" y="234.30" font-size="11" fill="#ccced3" text-anchor="end" font-weight="normal" textLength="18.84" lengthAdjust="spacingAndGlyphs" stroke="#ccced3" stroke-width="0.3" >+Inf</text>
<text x="871" y="258.73" font-size="11" fill="#ccced3" text-anchor="end" font-weight="normal" textLength="33.35" lengthAdjust="spacingAndGlyphs" stroke="#ccced3" stroke-width="0.3" >40 min</text>
<text x="871" y="283.16" font-size="11" fill="#ccced3" text-anchor="end" font-weight="normal" textLength="33.35" lengthAdjust="spacingAndGlyphs" stroke="#ccced3" stroke-width="0.3" >30 min</text>
<text x="871" y="307.59" font-size="11" fill="#ccced3" text-anchor="end" font-weight="normal" textLength="33.35" lengthAdjust="spacingAndGlyphs" stroke="#ccced3" stroke-width="0.3" >20 min</text>
<text x="871" y="332.02" font-size="11" fill="#ccced3" text-anchor="end" font-weight="normal" textLength="33.35" lengthAdjust="spacingAndGlyphs" stroke="#ccced3" stroke-width="0.3" >10 min</text>
<text x="871" y="356.45" font-size="11" fill="#ccced3" text-anchor="end" font-weight="normal" textLength="27.17" lengthAdjust="spacingAndGlyphs" stroke="#ccced3" stroke-width="0.3" >1 min</text>
<text x="871" y="380.88" font-size="11" fill="#ccced3" text-anchor="end" font-weight="normal" textLength="21.00" lengthAdjust="spacingAndGlyphs" stroke="#ccced3" stroke-width="0.3" >10 s</text>
<text x="1001.5" y="419" font-size="11" fill="#ccced3" text-anchor="middle" font-weight="normal" textLength="27.80" lengthAdjust="spacingAndGlyphs" stroke="#ccced3" stroke-width="0.3" >16:50</text>
<text x="1206.5" y="419" font-size="11" fill="#ccced3" text-anchor="middle" font-weight="normal" textLength="27.80" lengthAdjust="spacingAndGlyphs" stroke="#ccced3" stroke-width="0.3" >16:55</text>
<text x="1411.5" y="419" font-size="11" fill="#ccced3" text-anchor="middle" font-weight="normal" textLength="27.80" lengthAdjust="spacingAndGlyphs" stroke="#ccced3" stroke-width="0.3" >17:00</text>
<rect x="879.59" y="341.05" width="18.0" height="10" fill="#668c0e"/>
<rect x="900.04" y="341.05" width="18.0" height="10" fill="#668c0e"/>
<rect x="1104.56" y="341.05" width="18.0" height="10" fill="#668c0e"/>
<rect x="1125.01" y="341.05" width="18.0" height="10" fill="#b4ff00"/>
<rect x="1145.46" y="341.05" width="18.0" height="10" fill="#b4ff00"/>
<rect x="1309.08" y="341.05" width="18.0" height="10" fill="#668c0e"/>
<rect x="1329.53" y="341.05" width="18.0" height="10" fill="#b4ff00"/>
<rect x="1349.98" y="341.05" width="18.0" height="10" fill="#668c0e"/>
<rect x="827.5" y="449.5" width="686" height="257" rx="2.5" fill="#17181c" stroke="#222428" stroke-width="1"/>
<text x="1170.5" y="469" font-size="14" fill="#d8d9dc" text-anchor="middle" font-weight="bold" textLength="84" lengthAdjust="spacingAndGlyphs" stroke="#d8d9dc" stroke-width="0.3" >Step Duration</text>
<line x1="876" y1="496.50" x2="1490" y2="496.50" stroke="#37393d" stroke-width="1"/>
<line x1="876" y1="520.93" x2="1490" y2="520.93" stroke="#37393d" stroke-width="1"/>
<line x1="876" y1="545.36" x2="1490" y2="545.36" stroke="#37393d" stroke-width="1"/>
<line x1="876" y1="569.79" x2="1490" y2="569.79" stroke="#37393d" stroke-width="1"/>
<line x1="876" y1="594.22" x2="1490" y2="594.22" stroke="#37393d" stroke-width="1"/>
<line x1="876" y1="618.65" x2="1490" y2="618.65" stroke="#37393d" stroke-width="1"/>
<line x1="876" y1="643.08" x2="1490" y2="643.08" stroke="#37393d" stroke-width="1"/>
<line x1="876" y1="667.51" x2="1490" y2="667.51" stroke="#37393d" stroke-width="1"/>
<line x1="1001.5" y1="496.5" x2="1001.5" y2="667.5" stroke="#37393d" stroke-width="1"/>
<line x1="1206.5" y1="496.5" x2="1206.5" y2="667.5" stroke="#37393d" stroke-width="1"/>
<line x1="1411.5" y1="496.5" x2="1411.5" y2="667.5" stroke="#37393d" stroke-width="1"/>
<text x="871" y="500.30" font-size="11" fill="#ccced3" text-anchor="end" font-weight="normal" textLength="18.84" lengthAdjust="spacingAndGlyphs" stroke="#ccced3" stroke-width="0.3" >+Inf</text>
<text x="871" y="524.73" font-size="11" fill="#ccced3" text-anchor="end" font-weight="normal" textLength="33.35" lengthAdjust="spacingAndGlyphs" stroke="#ccced3" stroke-width="0.3" >40 min</text>
<text x="871" y="549.16" font-size="11" fill="#ccced3" text-anchor="end" font-weight="normal" textLength="33.35" lengthAdjust="spacingAndGlyphs" stroke="#ccced3" stroke-width="0.3" >30 min</text>
<text x="871" y="573.59" font-size="11" fill="#ccced3" text-anchor="end" font-weight="normal" textLength="33.35" lengthAdjust="spacingAndGlyphs" stroke="#ccced3" stroke-width="0.3" >20 min</text>
<text x="871" y="598.02" font-size="11" fill="#ccced3" text-anchor="end" font-weight="normal" textLength="33.35" lengthAdjust="spacingAndGlyphs" stroke="#ccced3" stroke-width="0.3" >10 min</text>
<text x="871" y="622.45" font-size="11" fill="#ccced3" text-anchor="end" font-weight="normal" textLength="27.17" lengthAdjust="spacingAndGlyphs" stroke="#ccced3" stroke-width="0.3" >1 min</text>
<text x="871" y="646.88" font-size="11" fill="#ccced3" text-anchor="end" font-weight="normal" textLength="21.00" lengthAdjust="spacingAndGlyphs" stroke="#ccced3" stroke-width="0.3" >10 s</text>
<text x="1001.5" y="685" font-size="11" fill="#ccced3" text-anchor="middle" font-weight="normal" textLength="27.80" lengthAdjust="spacingAndGlyphs" stroke="#ccced3" stroke-width="0.3" >16:50</text>
<text x="1206.5" y="685" font-size="11" fill="#ccced3" text-anchor="middle" font-weight="normal" textLength="27.80" lengthAdjust="spacingAndGlyphs" stroke="#ccced3" stroke-width="0.3" >16:55</text>
<text x="1411.5" y="685" font-size="11" fill="#ccced3" text-anchor="middle" font-weight="normal" textLength="27.80" lengthAdjust="spacingAndGlyphs" stroke="#ccced3" stroke-width="0.3" >17:00</text>
<rect x="879.59" y="619.65" width="18.0" height="10" fill="#668c0e"/>
<rect x="900.04" y="619.65" width="18.0" height="10" fill="#668c0e"/>
<rect x="1063.66" y="607.05" width="18.0" height="10" fill="#668c0e"/>
<rect x="1084.11" y="619.65" width="18.0" height="10" fill="#668c0e"/>
<rect x="1104.56" y="607.05" width="18.0" height="10" fill="#b4ff00"/>
<rect x="1104.56" y="619.65" width="18.0" height="10" fill="#668c0e"/>
<rect x="1125.01" y="607.05" width="18.0" height="10" fill="#b4ff00"/>
<rect x="1125.01" y="631.48" width="18.0" height="10" fill="#668c0e"/>
<rect x="1145.46" y="607.05" width="18.0" height="10" fill="#668c0e"/>
<rect x="1145.46" y="631.48" width="18.0" height="10" fill="#668c0e"/>
<rect x="1247.72" y="607.05" width="18.0" height="10" fill="#668c0e"/>
<rect x="1268.18" y="607.05" width="18.0" height="10" fill="#b4ff00"/>
<rect x="1288.63" y="607.05" width="18.0" height="10" fill="#b4ff00"/>
<rect x="1309.08" y="607.05" width="18.0" height="10" fill="#668c0e"/>
<rect x="1329.53" y="607.05" width="18.0" height="10" fill="#b4ff00"/>
<rect x="1349.98" y="607.05" width="18.0" height="10" fill="#668c0e"/>
<rect x="876.6" y="607.05" width="1.3" height="10" fill="#668c0e"/>
<rect x="827.5" y="715.5" width="686" height="257" rx="2.5" fill="#17181c" stroke="#222428" stroke-width="1"/>
<text x="1170.5" y="735" font-size="14" fill="#d8d9dc" text-anchor="middle" font-weight="bold" textLength="121" lengthAdjust="spacingAndGlyphs" stroke="#d8d9dc" stroke-width="0.3" >Command Duration</text>
<line x1="876" y1="762.50" x2="1490" y2="762.50" stroke="#37393d" stroke-width="1"/>
<line x1="876" y1="786.93" x2="1490" y2="786.93" stroke="#37393d" stroke-width="1"/>
<line x1="876" y1="811.36" x2="1490" y2="811.36" stroke="#37393d" stroke-width="1"/>
<line x1="876" y1="835.79" x2="1490" y2="835.79" stroke="#37393d" stroke-width="1"/>
<line x1="876" y1="860.22" x2="1490" y2="860.22" stroke="#37393d" stroke-width="1"/>
<line x1="876" y1="884.65" x2="1490" y2="884.65" stroke="#37393d" stroke-width="1"/>
<line x1="876" y1="909.08" x2="1490" y2="909.08" stroke="#37393d" stroke-width="1"/>
<line x1="876" y1="933.51" x2="1490" y2="933.51" stroke="#37393d" stroke-width="1"/>
<line x1="1001.5" y1="762.5" x2="1001.5" y2="933.5" stroke="#37393d" stroke-width="1"/>
<line x1="1206.5" y1="762.5" x2="1206.5" y2="933.5" stroke="#37393d" stroke-width="1"/>
<line x1="1411.5" y1="762.5" x2="1411.5" y2="933.5" stroke="#37393d" stroke-width="1"/>
<text x="871" y="766.30" font-size="11" fill="#ccced3" text-anchor="end" font-weight="normal" textLength="18.84" lengthAdjust="spacingAndGlyphs" stroke="#ccced3" stroke-width="0.3" >+Inf</text>
<text x="871" y="790.73" font-size="11" fill="#ccced3" text-anchor="end" font-weight="normal" textLength="33.35" lengthAdjust="spacingAndGlyphs" stroke="#ccced3" stroke-width="0.3" >40 min</text>
<text x="871" y="815.16" font-size="11" fill="#ccced3" text-anchor="end" font-weight="normal" textLength="33.35" lengthAdjust="spacingAndGlyphs" stroke="#ccced3" stroke-width="0.3" >30 min</text>
<text x="871" y="839.59" font-size="11" fill="#ccced3" text-anchor="end" font-weight="normal" textLength="33.35" lengthAdjust="spacingAndGlyphs" stroke="#ccced3" stroke-width="0.3" >20 min</text>
<text x="871" y="864.02" font-size="11" fill="#ccced3" text-anchor="end" font-weight="normal" textLength="33.35" lengthAdjust="spacingAndGlyphs" stroke="#ccced3" stroke-width="0.3" >10 min</text>
<text x="871" y="888.45" font-size="11" fill="#ccced3" text-anchor="end" font-weight="normal" textLength="27.17" lengthAdjust="spacingAndGlyphs" stroke="#ccced3" stroke-width="0.3" >1 min</text>
<text x="871" y="912.88" font-size="11" fill="#ccced3" text-anchor="end" font-weight="normal" textLength="21.00" lengthAdjust="spacingAndGlyphs" stroke="#ccced3" stroke-width="0.3" >10 s</text>
<text x="1001.5" y="951" font-size="11" fill="#ccced3" text-anchor="middle" font-weight="normal" textLength="27.80" lengthAdjust="spacingAndGlyphs" stroke="#ccced3" stroke-width="0.3" >16:50</text>
<text x="1206.5" y="951" font-size="11" fill="#ccced3" text-anchor="middle" font-weight="normal" textLength="27.80" lengthAdjust="spacingAndGlyphs" stroke="#ccced3" stroke-width="0.3" >16:55</text>
<text x="1411.5" y="951" font-size="11" fill="#ccced3" text-anchor="middle" font-weight="normal" textLength="27.80" lengthAdjust="spacingAndGlyphs" stroke="#ccced3" stroke-width="0.3" >17:00</text>
<rect x="879.59" y="885.65" width="18.0" height="10" fill="#4b6413"/>
<rect x="900.04" y="885.65" width="18.0" height="10" fill="#4b6413"/>
<rect x="1002.30" y="909.98" width="18.0" height="10" fill="#4b6413"/>
<rect x="1022.75" y="909.98" width="18.0" height="10" fill="#78a70b"/>
<rect x="1063.66" y="909.98" width="18.0" height="10" fill="#b4ff00"/>
<rect x="1063.66" y="873.05" width="18.0" height="10" fill="#4b6413"/>
<rect x="1084.11" y="909.98" width="18.0" height="10" fill="#4b6413"/>
<rect x="1084.11" y="885.65" width="18.0" height="10" fill="#4b6413"/>
<rect x="1084.11" y="897.48" width="18.0" height="10" fill="#4b6413"/>
<rect x="1104.56" y="873.05" width="18.0" height="10" fill="#4b6413"/>
<rect x="1104.56" y="885.65" width="18.0" height="10" fill="#4b6413"/>
<rect x="1104.56" y="897.48" width="18.0" height="10" fill="#4b6413"/>
<rect x="1125.01" y="873.05" width="18.0" height="10" fill="#4b6413"/>
<rect x="1125.01" y="885.65" width="18.0" height="10" fill="#4b6413"/>
<rect x="1125.01" y="897.48" width="18.0" height="10" fill="#4b6413"/>
<rect x="1145.46" y="873.05" width="18.0" height="10" fill="#4b6413"/>
<rect x="1145.46" y="897.48" width="18.0" height="10" fill="#4b6413"/>
<rect x="1186.37" y="909.98" width="18.0" height="10" fill="#b4ff00"/>
<rect x="1206.82" y="909.98" width="18.0" height="10" fill="#b4ff00"/>
<rect x="1206.82" y="897.48" width="18.0" height="10" fill="#4b6413"/>
<rect x="1227.27" y="885.65" width="18.0" height="10" fill="#78a70b"/>
<rect x="1247.72" y="885.65" width="18.0" height="10" fill="#4b6413"/>
<rect x="1268.18" y="873.05" width="18.0" height="10" fill="#78a70b"/>
<rect x="1288.63" y="873.05" width="18.0" height="10" fill="#78a70b"/>
<rect x="1309.08" y="873.05" width="18.0" height="10" fill="#4b6413"/>
<rect x="1329.53" y="873.05" width="18.0" height="10" fill="#78a70b"/>
<rect x="1349.98" y="873.05" width="18.0" height="10" fill="#4b6413"/>
<rect x="876.6" y="885.65" width="1.3" height="10" fill="#4b6413"/>
</svg>
<div id="winborder"></div>
</body>
</html>
